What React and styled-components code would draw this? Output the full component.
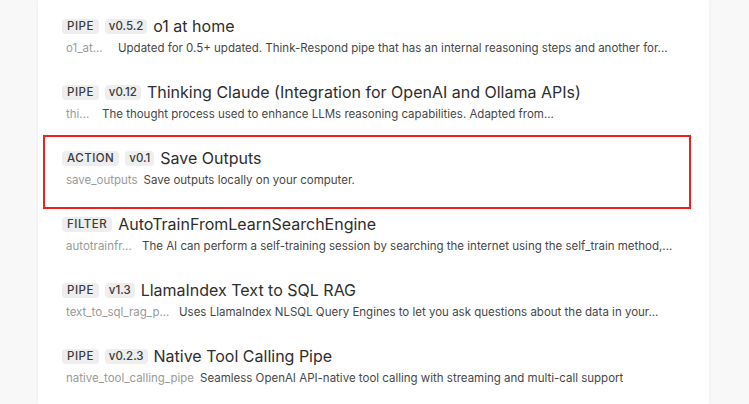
import React from "react";
import styled, { createGlobalStyle } from "styled-components";

const Global = createGlobalStyle`
  html, body {
    margin: 0;
    padding: 0;
    background: #f8f8f8;
    font-family: Inter, "Liberation Sans", Arial, sans-serif;
  }
`;

const Page = styled.div`
  display: flex;
  height: 404px;
  overflow: hidden;
`;

const Panel = styled.div`
  margin-left: 38px;
  width: 671px;
  background: #fff;
  box-shadow: 0 0 4px rgba(0, 0, 0, 0.06);
  padding-top: 7px;
`;

const Row = styled.div`
  margin: 0 22px 0 9px;
  padding: 8px 0 16px 15px;
  height: 66px;
  box-sizing: border-box;
  outline: ${(p) => (p.$highlighted ? "2px solid #f0211b" : "none")};
  outline-offset: 2px;
`;

const TitleLine = styled.div`
  display: flex;
  align-items: center;
  gap: 6px;
  height: 22px;
`;

const Badge = styled.span`
  font-size: 11.5px;
  font-weight: 500;
  color: #3a3a3a;
  background: #eeeeee;
  border-radius: 4px;
  padding: 0 ${(p) => (p.$upper ? "5px" : "4px")};
  line-height: 15px;
  letter-spacing: ${(p) => (p.$upper ? "0.5px" : "0")};
  text-transform: ${(p) => (p.$upper ? "uppercase" : "none")};
`;

const Title = styled.span`
  font-size: 16px;
  font-weight: 400;
  color: #2e2e2e;
  white-space: nowrap;
`;

const SubLine = styled.div`
  display: flex;
  align-items: center;
  margin-top: 2px;
  padding-left: 4px;
  height: 18px;
  font-size: 11.5px;
  white-space: nowrap;
`;

const Id = styled.span`
  color: #9a9a9a;
  width: ${(p) => (p.$width ? `${p.$width}px` : "auto")};
  flex-shrink: 0;
  margin-right: 6px;
`;

const Desc = styled.span`
  color: #474747;
  overflow: hidden;
  text-overflow: ellipsis;
`;

const ITEMS = [
  {
    type: "pipe",
    version: "v0.5.2",
    title: "o1 at home",
    id: "o1_at...",
    idWidth: 46,
    desc: "Updated for 0.5+ updated. Think-Respond pipe that has an internal reasoning steps and another for...",
  },
  {
    type: "pipe",
    version: "v0.12",
    title: "Thinking Claude (Integration for OpenAI and Ollama APIs)",
    id: "thi...",
    idWidth: 30,
    desc: "The thought process used to enhance LLMs reasoning capabilities. Adapted from...",
  },
  {
    type: "action",
    version: "v0.1",
    title: "Save Outputs",
    id: "save_outputs",
    desc: "Save outputs locally on your computer.",
    highlighted: true,
  },
  {
    type: "filter",
    title: "AutoTrainFromLearnSearchEngine",
    id: "autotrainfr...",
    idWidth: 70,
    desc: "The AI can perform a self-training session by searching the internet using the self_train method,...",
  },
  {
    type: "pipe",
    version: "v1.3",
    title: "LlamaIndex Text to SQL RAG",
    id: "text_to_sql_rag_p...",
    idWidth: 107,
    desc: "Uses LlamaIndex NLSQL Query Engines to let you ask questions about the data in your...",
  },
  {
    type: "pipe",
    version: "v0.2.3",
    title: "Native Tool Calling Pipe",
    id: "native_tool_calling_pipe",
    desc: "Seamless OpenAI API-native tool calling with streaming and multi-call support",
  },
];

export default function App() {
  return (
    <>
      <Global />
      <Page>
        <Panel>
          {ITEMS.map((item) => (
            <Row key={item.id} $highlighted={item.highlighted}>
              <TitleLine>
                <Badge $upper>{item.type}</Badge>
                {item.version && <Badge>{item.version}</Badge>}
                <Title>{item.title}</Title>
              </TitleLine>
              <SubLine>
                <Id $width={item.idWidth}>{item.id}</Id>
                <Desc>{item.desc}</Desc>
              </SubLine>
            </Row>
          ))}
        </Panel>
      </Page>
    </>
  );
}
